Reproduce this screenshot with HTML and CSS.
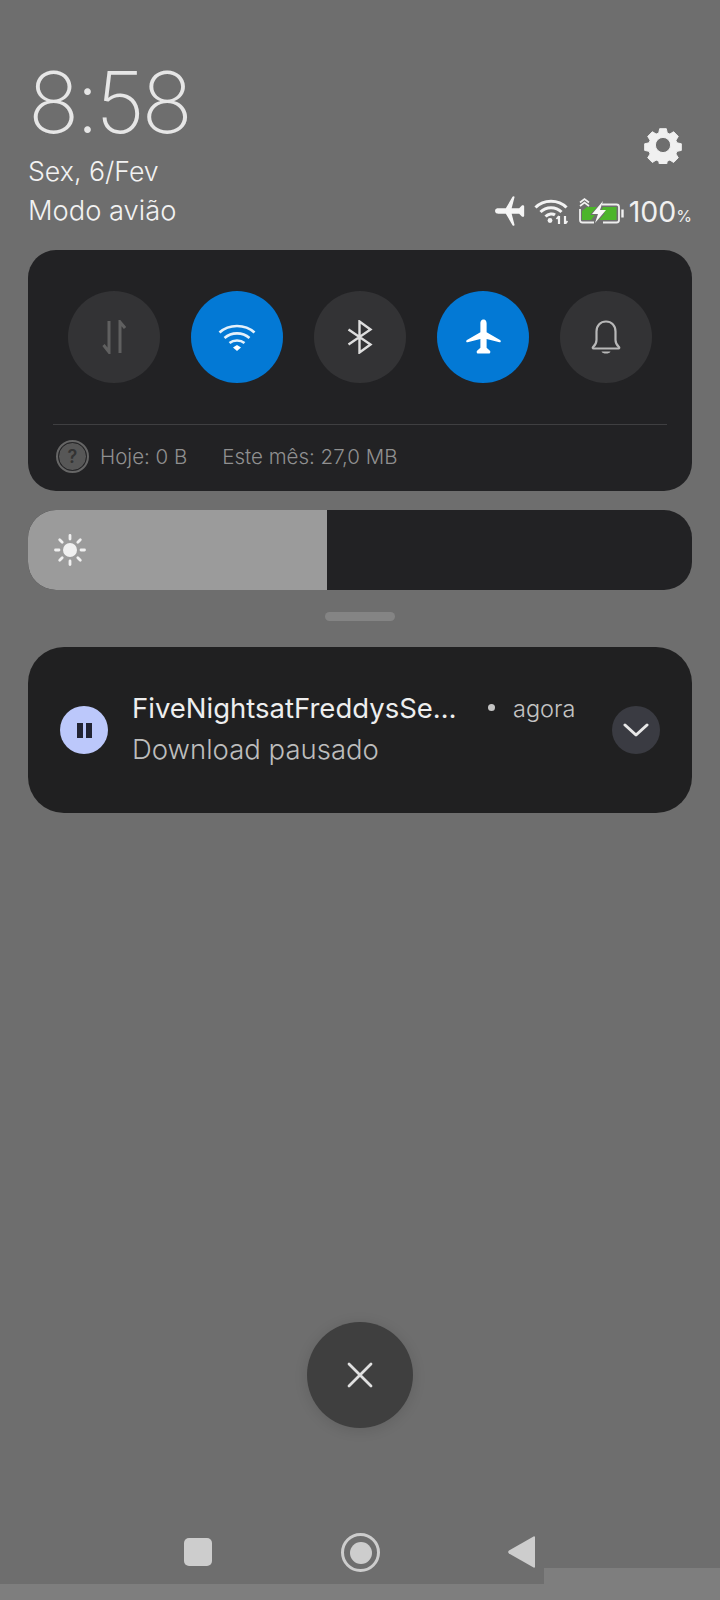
FILE: index.html
```html
<!DOCTYPE html>
<html lang="pt">
<head>
    <meta charset="UTF-8">
    <meta name="viewport" content="width=device-width, initial-scale=1.0">
    <title>Painel de controle</title>
    <link rel="stylesheet" href="styles.css">
</head>
<body>
    <svg class="defs" width="0" height="0">
        <symbol id="plane" viewBox="0 0 36 36">
            <path d="M18 0c-2.600 0-3.200 2.500-3.200 4v9L1 21c-1.200.7-1 2.800.6 2.400L14.800 20v9l-3.400 3.200c-.8.8-.5 2.800 1 2.800h11.200c1.500 0 1.800-2 1-2.800L21.200 29v-9l13.200 3.400c1.600.4 1.800-1.700.6-2.400L21.200 13V4c0-1.500-.6-4-3.200-4z"/>
        </symbol>
    </svg>

    <!-- Header -->
    <header class="top">
        <div class="top-left">
            <div class="clock">8:58</div>
            <div class="date">Sex, 6/Fev</div>
            <div class="mode">Modo avião</div>
        </div>
        <div class="top-right">
            <svg class="gear" viewBox="0 0 36 36">
                <path fill="#f0f0f0" fill-rule="evenodd" d="M14.500.8h7l1 4.600 2.700 1.100 4-2.500 4.900 5-2.500 4 1.100 2.700 4.600 1v7l-4.600 1-1.100 2.700 2.500 4-4.900 5-4-2.500-2.700 1.100-1 4.600h-7l-1-4.600-2.700-1.100-4 2.500-4.900-5 2.500-4-1.100-2.700-4.600-1v-7l4.600-1 1.100-2.700-2.500-4 4.900-5 4 2.500 2.700-1.100zM18 10a8 8 0 1 0 0 16 8 8 0 0 0 0-16z" transform="translate(1.800 1.800) scale(.9)" stroke="#f0f0f0" stroke-width="1" stroke-linejoin="round"/>
            </svg>
            <div class="status">
                <svg class="status-plane"><use href="#plane"/></svg>
                <svg class="status-wifi" viewBox="0 0 34 26" fill="none" stroke="#f2f2f2" stroke-width="3">
                    <path d="M1.500 9.500C9.500 1 24.500 1 32.500 9.500"/>
                    <path d="M6.500 14C12 8.300 22 8.300 27.500 14"/>
                    <path d="M11.500 18.500C14.500 15.500 19 15.500 21 17"/>
                    <circle cx="16" cy="22.500" r="2.400" fill="#f2f2f2" stroke="none"/>
                    <path d="M25 18v8M31 18v8" stroke-width="2.200"/>
                    <path d="M22.500 21l2.500-3M33.500 23l-2.500 3" stroke-width="1.800"/>
                </svg>
                <svg class="status-battery" viewBox="0 0 46 26" fill="none">
                    <path d="M2 11v11a2.500 2.500 0 0 0 2.500 2.500H16M24 6.500h14.500a2.500 2.500 0 0 1 2.500 2.500v13a2.500 2.500 0 0 1-2.500 2.500H25" stroke="#eee" stroke-width="1.800"/>
                    <path d="M4 13l5-4h10l-7 8h5l-4 5H4zM25 9h13.500v13H21l6-7h-5z" fill="#4cb52a"/>
                    <path d="M25 3L14 16h6l-3 9 11-13h-6z" fill="#f8f8f8"/>
                    <path d="M44.500 11.500v8" stroke="#f2f2f2" stroke-width="2.400"/>
                    <path d="M2 8l4.500-3.500L11 8M2 4.500L6.500 1 11 4.500" stroke="#f2f2f2" stroke-width="1.600"/>
                </svg>
                <span class="level">100<small>%</small></span>
            </div>
        </div>
    </header>

    <!-- Toggles -->
    <section class="panel">
        <div class="toggles">
            <div class="toggle">
                <svg class="icon-data" viewBox="0 0 24 34" fill="none" stroke="#606060" stroke-width="3">
                    <path d="M7 1v31L1.500 25"/>
                    <path d="M18 33V2l5 6"/>
                </svg>
            </div>
            <div class="toggle on">
                <svg class="icon-wifi" viewBox="0 0 38 28" fill="none" stroke="#e4f1fb" stroke-width="2.600">
                    <path d="M1.500 9.500C11 .8 27 .8 36.500 9.500"/>
                    <path d="M6.500 15C13.500 8.800 24.500 8.800 31.500 15"/>
                    <path d="M11.500 20C15.500 16.700 22.500 16.700 26.500 20"/>
                    <path d="M15 24.500L19 22l4 2.500L19 28z" fill="#fff" stroke="none"/>
                </svg>
            </div>
            <div class="toggle">
                <svg class="icon-bt" viewBox="0 0 26 34" fill="none" stroke="#dedede" stroke-width="2.400">
                    <path d="M1.500 9.500L23.500 24.500 12.500 32.500V1.500L23.500 9.500 1.500 24.500"/>
                </svg>
            </div>
            <div class="toggle on">
                <svg class="icon-plane" fill="#fff"><use href="#plane"/></svg>
            </div>
            <div class="toggle">
                <svg class="icon-bell" viewBox="0 0 30 34" fill="none" stroke="#b8b8b8" stroke-width="2.200">
                    <path d="M2 27c2.500-2 3.500-4 3.500-7v-8.500C5.500 5.500 9.500 1.500 15 1.500s9.500 4 9.500 10V20c0 3 1 5 3.500 7 .5.500.3 1.500-.5 1.500h-25c-.8 0-1-1-.5-1.500z"/>
                    <path d="M10.500 31.500h9c-.5 1.500-2.500 2-4.500 2s-4-.5-4.500-2z" fill="#b8b8b8" stroke="none"/>
                </svg>
            </div>
        </div>
        <div class="usage">
            <span class="help">?</span>
            <span class="today">Hoje: 0 B</span>
            <span>Este mês: 27,0 MB</span>
        </div>
    </section>

    <!-- Brightness -->
    <div class="slider">
        <div class="slider-fill" style="width: 45%">
            <svg class="sun" viewBox="0 0 32 32" fill="#f0f0f0" stroke="#f0f0f0" stroke-width="2.800" stroke-linecap="round">
                <circle cx="16" cy="16" r="7" stroke="none"/>
                <path d="M16 1.500v3.500M16 27v3.500M1.500 16H5M27 16h3.500M5.700 5.700l2.500 2.500M23.800 23.800l2.500 2.500M5.700 26.300l2.500-2.500M23.800 8.200l2.500-2.500"/>
            </svg>
        </div>
    </div>

    <div class="handle"></div>

    <!-- Notification -->
    <section class="notification">
        <div class="pause"><span></span><span></span></div>
        <div class="notification-text">
            <div class="title-row">
                <span class="title">FiveNightsatFreddysSe…</span>
                <span class="dot"></span>
                <span class="time">agora</span>
            </div>
            <div class="subtitle">Download pausado</div>
        </div>
        <div class="expand">
            <svg viewBox="0 0 26 16" fill="none" stroke="#e8e8e8" stroke-width="3" stroke-linecap="round" stroke-linejoin="round">
                <path d="M2 3l11 10L24 3"/>
            </svg>
        </div>
    </section>

    <div class="spacer"></div>

    <!-- Close -->
    <div class="close">
        <svg viewBox="0 0 26 26" fill="none" stroke="#e0e0e0" stroke-width="2.800" stroke-linecap="round">
            <path d="M2 2l22 22M24 2L2 24"/>
        </svg>
    </div>

    <!-- Navigation -->
    <nav class="navbar">
        <span class="nav-square"></span>
        <span class="nav-home"><span></span></span>
        <svg class="nav-back" viewBox="0 0 27 34"><path d="M26 1.200a1 1 0 0 1 1 .8V32a1 1 0 0 1-1 .8L1 18.500a2 2 0 0 1 0-3z" fill="#cdcdcd"/></svg>
    </nav>
</body>
</html>
```

FILE: styles.css
```css
/* General */
body {
    font-family: "Inter", "Noto Sans", sans-serif;
    margin: 0;
    width: 720px;
    height: 1600px;
    overflow: hidden;
    background-color: #6e6e6e;
    color: #eee;
    display: flex;
    flex-direction: column;
}

.defs {
    position: absolute;
}

/* Header */
.top {
    display: flex;
    justify-content: space-between;
    align-items: flex-end;
    height: 230px;
    padding: 0 28px;
    margin-bottom: 20px;
    flex-shrink: 0;
}

.clock {
    font-size: 85px;
    font-weight: 200;
    line-height: 100px;
    color: #e6e6e6;
    letter-spacing: -3.500px;
    margin-bottom: -1px;
}

.date,
.mode {
    font-size: 26.700px;
    font-weight: 300;
    line-height: 39px;
    color: #f2f2f2;
}

.mode {
    font-size: 27.300px;
}

.top-right {
    display: flex;
    flex-direction: column;
    align-items: flex-end;
}

.gear {
    width: 38px;
    height: 38px;
    margin-right: 10px;
    margin-bottom: 28px;
}

.status {
    display: flex;
    align-items: center;
    height: 38px;
}

.status-plane {
    width: 30px;
    height: 30px;
    fill: #f4f4f4;
    transform: rotate(-90deg);
    margin-right: 9px;
}

.status-wifi {
    width: 34px;
    height: 26px;
    margin-right: 10px;
}

.status-battery {
    width: 46px;
    height: 26px;
    margin-right: 5px;
}

.level {
    font-size: 28.500px;
    font-weight: 400;
    color: #f0f0f0;
}

.level small {
    font-size: 16px;
}

/* Toggle panel */
.panel {
    margin: 0 28px;
    height: 241px;
    box-sizing: border-box;
    background-color: #222224;
    border-radius: 28px;
    padding: 41px 25px 0;
    flex-shrink: 0;
}

.toggles {
    display: flex;
    justify-content: space-between;
    padding: 0 15px 41px 15px;
    border-bottom: 1px solid #3f3f41;
}

.toggle {
    width: 92px;
    height: 92px;
    border-radius: 50%;
    background-color: #333335;
    display: flex;
    align-items: center;
    justify-content: center;
}

.toggle.on {
    background-color: #0379d5;
}

.icon-data { width: 24px; height: 34px; }
.icon-wifi { width: 38px; height: 28px; }
.icon-bt { width: 26px; height: 34px; }
.icon-plane { width: 35px; height: 36px; }
.icon-bell { width: 30px; height: 34px; }

.usage {
    display: flex;
    align-items: center;
    height: 62px;
    font-size: 20.500px;
    font-weight: 300;
    color: #909090;
    padding-left: 5px;
}

.help {
    width: 27px;
    height: 27px;
    border-radius: 50%;
    background-color: #575757;
    border: 1.500px solid #222224;
    outline: 2px solid #666;
    color: #333;
    font-size: 18px;
    font-weight: 600;
    display: flex;
    align-items: center;
    justify-content: center;
    margin-right: 13px;
}

.today {
    margin-right: 35px;
}

/* Brightness */
.slider {
    margin: 19px 28px 0;
    height: 80px;
    border-radius: 28px;
    background-color: #222224;
    overflow: hidden;
    flex-shrink: 0;
}

.slider-fill {
    height: 100%;
    background-color: #9b9b9b;
    display: flex;
    align-items: center;
    padding-left: 26px;
    box-sizing: border-box;
}

.sun {
    width: 32px;
    height: 32px;
}

.handle {
    width: 70px;
    height: 9px;
    border-radius: 5px;
    background-color: #848484;
    margin: 22px auto 26px;
    flex-shrink: 0;
}

/* Notification */
.notification {
    margin: 0 28px;
    height: 166px;
    border-radius: 36px;
    background-color: #202021;
    display: flex;
    align-items: center;
    padding: 0 32px;
    flex-shrink: 0;
}

.pause {
    width: 48px;
    height: 48px;
    border-radius: 50%;
    background-color: #bcc8fb;
    display: flex;
    align-items: center;
    justify-content: center;
    gap: 3px;
    margin-right: 24px;
    flex-shrink: 0;
}

.pause span {
    width: 6px;
    height: 15px;
    background-color: #222433;
}

.notification-text {
    flex: 1;
    padding-bottom: 2px;
}

.title-row {
    display: flex;
    align-items: center;
    height: 39px;
}

.title {
    font-size: 27.500px;
    font-weight: 400;
    color: #eee;
    width: 356px;
    white-space: nowrap;
}

.dot {
    width: 7px;
    height: 7px;
    border-radius: 50%;
    background-color: #c4c4c4;
    margin-right: 18px;
    margin-bottom: 2px;
}

.time {
    font-size: 23.500px;
    font-weight: 300;
    color: #c4c4c4;
}

.subtitle {
    font-size: 27.500px;
    font-weight: 300;
    line-height: 42px;
    color: #bdbdbd;
}

.expand {
    width: 48px;
    height: 48px;
    border-radius: 50%;
    background-color: #3a3b42;
    display: flex;
    align-items: center;
    justify-content: center;
    flex-shrink: 0;
}

.expand svg {
    width: 26px;
    height: 16px;
}

/* Close button */
.spacer {
    flex: 1;
}

.close {
    width: 106px;
    height: 106px;
    border-radius: 50%;
    background-color: #3f3f3f;
    box-shadow: 0 2px 14px rgba(0, 0, 0, 0.12);
    display: flex;
    align-items: center;
    justify-content: center;
    margin: 0 auto 104px;
    flex-shrink: 0;
}

.close svg {
    width: 26px;
    height: 26px;
}

/* Navigation, with the lighter strip along the bottom edge */
.navbar {
    display: flex;
    align-items: flex-start;
    box-sizing: border-box;
    height: 68px;
    padding-left: 184px;
    flex-shrink: 0;
    background:
        linear-gradient(#7e7e7e, #7e7e7e) left bottom / 544px 16px no-repeat,
        linear-gradient(#7e7e7e, #7e7e7e) right bottom / 176px 32px no-repeat;
}

.nav-square {
    width: 28px;
    height: 28px;
    border-radius: 5px;
    background-color: #cdcdcd;
    margin: 6px 129px 0 0;
}

.nav-home {
    width: 33px;
    height: 33px;
    border: 3px solid #cdcdcd;
    border-radius: 50%;
    display: flex;
    align-items: center;
    justify-content: center;
    margin: 1px 128px 0 0;
}

.nav-home span {
    width: 22px;
    height: 22px;
    border-radius: 50%;
    background-color: #cdcdcd;
}

.nav-back {
    width: 27px;
    height: 34px;
    margin-top: 3px;
}
```
